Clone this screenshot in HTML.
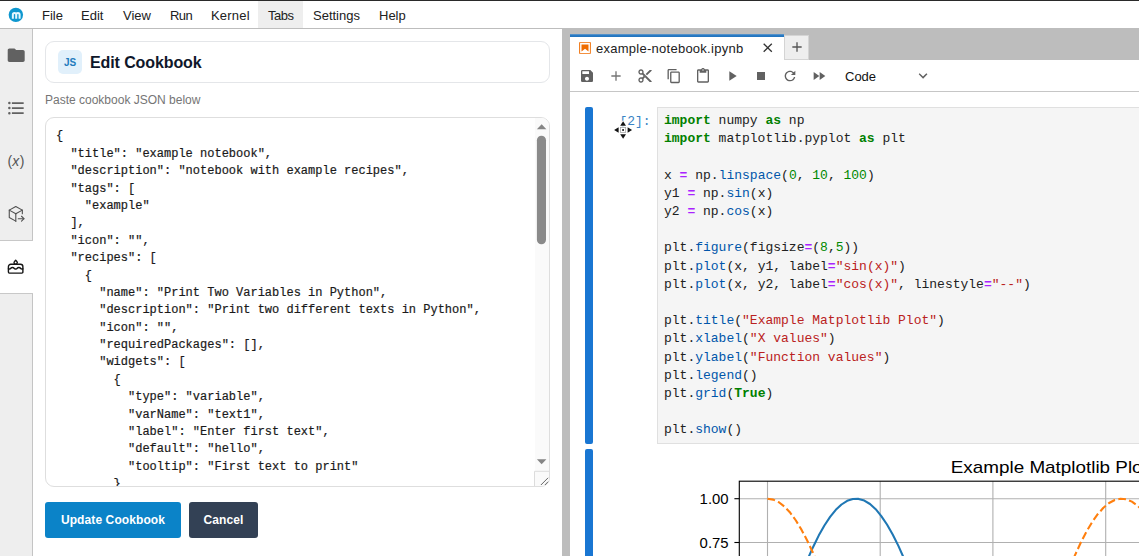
<!DOCTYPE html>
<html>
<head>
<meta charset="utf-8">
<title>Edit Cookbook</title>
<style>
html,body{margin:0;padding:0;}
body{width:1139px;height:556px;overflow:hidden;background:#fff;position:relative;font-family:"Liberation Sans",sans-serif;color:#212121;}
.abs{position:absolute;}
/* top bar */
#topline{left:0;top:0;width:1139px;height:1px;background:#2a2a2a;}
#menubar{left:0;top:1px;width:1139px;height:27px;background:#fff;border-bottom:1px solid #bdbdbd;}
.mi{position:absolute;top:0;height:27px;line-height:30px;font-size:13px;color:#212121;white-space:nowrap;}
#tabsbg{left:258px;top:0;width:45px;height:27px;background:#eeeeee;}
/* sidebar */
#sidebar{left:0;top:29px;width:32px;height:527px;background:#eeeeee;border-right:1px solid #c4c4c4;}
#seltab{left:0;top:240px;width:33px;height:52px;background:#fff;border-top:1px solid #c8c8c8;border-bottom:1px solid #c8c8c8;}
/* left panel */
#card{left:45px;top:41px;width:503px;height:40px;border:1px solid #e4e6e9;border-radius:9px;background:#fff;}
#jsbox{left:58px;top:50px;width:24px;height:24px;border-radius:5px;background:#e1f0fb;color:#1e7bbd;font-weight:bold;font-size:10px;line-height:25px;text-align:center;}
#title{left:90px;top:51px;letter-spacing:-0.1px;font-size:16px;font-weight:bold;color:#0f172a;line-height:24px;white-space:nowrap;}
#hint{left:45px;top:92px;font-size:12px;color:#757575;line-height:16px;white-space:nowrap;}
#ta{left:45px;top:117px;width:503px;height:368px;border:1px solid #dedede;border-radius:9px;background:#fff;overflow:hidden;}
#ta pre{margin:0;position:absolute;left:10px;top:10.4px;font-family:"Liberation Mono",monospace;font-size:12px;line-height:17.39px;color:#1a1a1a;-webkit-text-stroke:0.2px #1a1a1a;}
#track{left:489px;top:0;width:15px;height:368px;background:#fafafa;}
#thumb{left:492px;top:18px;width:9px;height:109px;border-radius:5px;background:#8b8b8b;}
#grip{left:488px;top:353px;width:15px;height:15px;background:#fafafa;border-left:1px solid #dcdcdc;border-top:1px solid #dcdcdc;}
.btn{letter-spacing:0.1px;position:absolute;top:502px;height:36px;border-radius:3px;color:#fff;font-weight:bold;font-size:12px;line-height:36px;text-align:center;white-space:nowrap;}
#b1{left:45px;width:136px;background:#0b83c8;}
#b2{left:189px;width:69px;background:#334155;}
/* right dock */
#dockbg{left:562px;top:29px;width:577px;height:527px;background:#bdbdbd;}
#tabline{left:570px;top:34px;width:214px;height:3px;background:linear-gradient(to bottom,#6f9fcb 0,#2a7bc4 40%,#1f72bd 100%);}
#tab{left:570px;top:37px;width:214px;height:23px;background:#fff;}
#tablabel{left:596px;top:38px;letter-spacing:0.26px;font-size:13px;line-height:22px;color:#212121;white-space:nowrap;}
#addbtn{left:784px;top:35px;width:23px;height:23px;background:#eeeeee;border:1px solid #d4d4d4;}
#nbtoolbar{left:570px;top:60px;width:569px;height:31px;background:#fff;border-bottom:1px solid #c6c6c6;}
#nb{left:570px;top:92px;width:569px;height:464px;background:#fff;}
.coll{position:absolute;left:585px;width:8px;background:#1976d2;border-radius:2px;}
#prompt{left:619.4px;top:113px;font-family:"Liberation Mono",monospace;font-size:13px;line-height:18.2px;color:#3a84c5;white-space:pre;}
#editor{left:657px;top:107px;width:500px;height:335px;background:#f5f5f5;border:1px solid #e0e0e0;}
#editor pre{margin:0;position:absolute;left:6px;top:4px;font-family:"Liberation Mono",monospace;font-size:13px;line-height:18.2px;color:#212121;}
.k{color:#008000;font-weight:bold;}
.o{color:#aa22ff;font-weight:bold;}
.n{color:#008800;}
.s{color:#ba2121;}
.p{color:#0055aa;}

svg{position:absolute;overflow:visible;}
.sbi{left:5.7px;width:20.6px;height:20.6px;}
.tbi{top:68px;width:16px;height:16px;fill:#616161;}
#vx{left:0;top:152px;width:32px;text-align:center;font-size:14px;line-height:18px;color:#555;white-space:nowrap;letter-spacing:0.3px;}
#codesel{left:845px;top:67px;font-size:13px;line-height:20px;color:#111;}
</style>
</head>
<body>
<div class="abs" id="topline"></div>
<div class="abs" id="menubar">
  <div class="abs" id="tabsbg"></div>
  <span class="mi" style="left:42px">File</span>
  <span class="mi" style="left:81px">Edit</span>
  <span class="mi" style="left:123px">View</span>
  <span class="mi" style="left:170px;letter-spacing:-0.6px">Run</span>
  <span class="mi" style="left:211px;letter-spacing:0.2px">Kernel</span>
  <span class="mi" style="left:268px;letter-spacing:-0.45px">Tabs</span>
  <span class="mi" style="left:313px">Settings</span>
  <span class="mi" style="left:379px">Help</span>
</div>
<div class="abs" id="sidebar"></div>
<div class="abs" id="seltab"></div>


<!-- logo -->
<svg style="left:0;top:0;width:32px;height:29px" viewBox="0 0 32 29"><circle cx="15.85" cy="14.85" r="7.2" fill="#0e97cf"/><path d="M12.85 18.7V14.4Q12.85 12.9 14.5 12.9Q16.2 12.9 16.2 14.4V18.7M16.2 14.4Q16.2 12.9 17.9 12.9Q19.6 12.9 19.6 14.4V18.7" fill="none" stroke="#e4f7ff" stroke-width="2" stroke-linejoin="round"/></svg>
<!-- sidebar icons -->
<svg class="sbi" style="left:5.75px;top:44.6px;width:20.4px;height:20.4px" viewBox="0 0 24 24"><path fill="#616161" d="M10 4H4c-1.1 0-1.99.9-1.99 2L2 18c0 1.1.9 2 2 2h16c1.1 0 2-.9 2-2V8c0-1.1-.9-2-2-2h-8l-2-2z"/></svg>
<svg class="sbi" style="left:5.94px;top:98px;width:20.2px;height:20.2px" viewBox="0 0 24 24"><path fill="#616161" d="M7 5h14v2H7V5zm0 8v-2h14v2H7zM4 4.5A1.5 1.5 0 015.5 6 1.5 1.5 0 014 7.5 1.5 1.5 0 012.5 6 1.5 1.5 0 014 4.500zm0 6A1.5 1.5 0 015.5 12 1.5 1.5 0 014 13.5 1.5 1.5 0 012.5 12 1.5 1.5 0 014 10.5zM7 19v-2h14v2H7zm-3-2.5A1.5 1.5 0 015.5 18 1.5 1.5 0 014 19.5 1.5 1.5 0 012.5 18 1.5 1.5 0 014 16.5z"/></svg>
<div class="abs" id="vx">(<i>x</i>)</div>
<svg class="sbi" style="left:6.23px;top:204px;width:19.6px;height:19.6px" viewBox="0 0 24 24" fill="none" stroke="#505050" stroke-width="1.35" stroke-linecap="round" stroke-linejoin="round"><path d="M12 21l-8-4.500v-9l8-4.500l8 4.500v4.500"/><path d="M12 12l8-4.500"/><path d="M12 12v9"/><path d="M12 12l-8-4.500"/><path d="M15 18h7"/><path d="M19 15l3 3l-3 3"/></svg>
<svg class="sbi" style="left:6.2px;top:257.4px;width:19.3px;height:19.3px" viewBox="0 0 24 24" fill="none" stroke="#161616" stroke-width="1.75" stroke-linecap="round" stroke-linejoin="round"><path d="M4.2 20h15.600a1.200 1.200 0 0 0 1.200-1.200v-6.800a3 3 0 0 0-3-3h-12a3 3 0 0 0-3 3v6.800a1.200 1.200 0 0 0 1.200 1.200z"/><path d="M3 14.803c.312.135.654.204 1 .197a2.4 2.4 0 0 0 2-1 2.4 2.4 0 0 1 2-1 2.4 2.4 0 0 1 2 1 2.4 2.4 0 0 0 2 1 2.4 2.4 0 0 0 2-1 2.4 2.4 0 0 1 2-1 2.4 2.4 0 0 1 2 1 2.4 2.4 0 0 0 2 1c.35.007.692-.062 1-.197"/><path d="M12 4l1.465 1.638a2 2 0 1 1-3.015.099l1.55-1.737z"/></svg>

<div class="abs" id="card"></div>
<div class="abs" id="jsbox">JS</div>
<div class="abs" id="title">Edit Cookbook</div>
<div class="abs" id="hint">Paste cookbook JSON below</div>
<div class="abs" id="ta">
<div class="abs" id="track"></div>
<pre>{
  "title": "example notebook",
  "description": "notebook with example recipes",
  "tags": [
    "example"
  ],
  "icon": "",
  "recipes": [
    {
      "name": "Print Two Variables in Python",
      "description": "Print two different texts in Python",
      "icon": "",
      "requiredPackages": [],
      "widgets": [
        {
          "type": "variable",
          "varName": "text1",
          "label": "Enter first text",
          "default": "hello",
          "tooltip": "First text to print"
        }
      ]</pre>
</div>
<div class="btn" id="b1">Update Cookbook</div>
<div class="btn" id="b2">Cancel</div>

<div class="abs" id="dockbg"></div>
<div class="abs" id="tabline"></div>
<div class="abs" id="tab"></div>
<div class="abs" id="tablabel">example-notebook.ipynb</div>
<div class="abs" id="addbtn"></div>
<div class="abs" id="nbtoolbar"></div>

<!-- tab icon, close, plus -->
<svg style="left:577.95px;top:40.85px;width:14px;height:14px" viewBox="0 0 22 22"><g fill="#ef6c00"><path d="M18.7 3.3v15.4H3.3V3.3h15.4m1.5-1.5H1.8v18.3h18.3l.1-18.300z"/><path d="M16.5 16.5l-5.400-4.300-5.600 4.300v-11h11z"/></g></svg>
<svg style="left:760.3px;top:40.4px;width:15.5px;height:15.5px" viewBox="0 0 24 24"><path fill="#333" d="M19 6.410L17.590 5 12 10.590 6.410 5 5 6.410 10.590 12 5 17.590 6.410 19 12 13.410 17.590 19 19 17.590 13.410 12z"/></svg>
<svg style="left:789px;top:39px;width:16px;height:16px" viewBox="0 0 24 24"><path fill="#555" d="M19 13h-6v6h-2v-6H5v-2h6V5h2v6h6v2z"/></svg>
<!-- toolbar -->
<svg class="tbi" style="left:579px" viewBox="0 0 24 24"><path d="M17 3H5a2 2 0 00-2 2v14a2 2 0 002 2h14c1.100 0 2-.9 2-2V7l-4-4zm-5 16c-1.660 0-3-1.340-3-3s1.340-3 3-3 3 1.340 3 3-1.340 3-3 3zm3-10H5V5h10v4z"/></svg>
<svg class="tbi" style="left:608px" viewBox="0 0 24 24"><path fill="#757575" d="M19 13h-6v6h-2v-6H5v-2h6V5h2v6h6v2z"/></svg>
<svg class="tbi" style="left:637px" viewBox="0 0 24 24"><path d="M9.640 7.640c.230-.5.360-1.050.360-1.640 0-2.210-1.790-4-4-4S2 3.790 2 6s1.790 4 4 4c.590 0 1.140-.130 1.640-.360L10 12l-2.360 2.360C7.140 14.130 6.590 14 6 14c-2.210 0-4 1.790-4 4s1.790 4 4 4 4-1.790 4-4c0-.590-.130-1.140-.360-1.640L12 14l7 7h3v-1L9.640 7.640zM6 8c-1.100 0-2-.890-2-2s.9-2 2-2 2 .890 2 2-.9 2-2 2zm0 12c-1.100 0-2-.890-2-2s.9-2 2-2 2 .890 2 2-.9 2-2 2zm6-7.500c-.280 0-.5-.220-.5-.5s.220-.5.5-.5.500.220.500.5-.220.500-.5.500zM19 3l-6 6 2 2 7-7V3z"/></svg>
<svg class="tbi" style="left:665.5px" viewBox="0 0 18 18"><path d="M11.9 1H3.2c-.8 0-1.500.7-1.500 1.500v10.200h1.500V2.500h8.700V1zm2.200 2.900h-8c-.8 0-1.500.7-1.500 1.500v10.200c0 .8.7 1.500 1.500 1.500h8c.8 0 1.500-.7 1.500-1.500V5.400c-.1-.8-.7-1.500-1.500-1.500zm0 11.600h-8V5.400h8v10.100z"/></svg>
<svg class="tbi" style="left:695px" viewBox="0 0 24 24"><path d="M19 2h-4.180C14.400.84 13.300 0 12 0c-1.300 0-2.400.84-2.820 2H5c-1.100 0-2 .9-2 2v16c0 1.100.9 2 2 2h14c1.100 0 2-.9 2-2V4c0-1.100-.9-2-2-2zm-7 0c.550 0 1 .450 1 1s-.450 1-1 1-1-.450-1-1 .450-1 1-1zm7 18H5V4h2v3h10V4h2v16z"/></svg>
<svg class="tbi" style="left:724px" viewBox="0 0 24 24"><path d="M8 5v14l11-7z"/></svg>
<svg class="tbi" style="left:753px" viewBox="0 0 24 24"><path d="M6 6h12v12H6z"/></svg>
<svg class="tbi" style="left:782px" viewBox="0 0 18 18"><path d="M9 13.500c-2.490 0-4.500-2.010-4.500-4.500S6.510 4.500 9 4.500c1.240 0 2.360.520 3.170 1.330L10 8h5V3l-1.760 1.760C12.150 3.680 10.660 3 9 3 5.690 3 3.010 5.690 3.010 9S5.690 15 9 15c2.970 0 5.430-2.160 5.900-5h-1.520c-.460 2-2.240 3.500-4.380 3.500z"/></svg>
<svg class="tbi" style="left:811px" viewBox="0 0 24 24"><path d="M4 18l8.500-6L4 6v12zm9-12v12l8.500-6L13 6z"/></svg>
<div class="abs" id="codesel">Code</div>
<svg style="left:915px;top:68px;width:16px;height:16px" viewBox="0 0 18 18"><path fill="#616161" d="M5.200 5.900L9 9.700l3.800-3.800 1.200 1.200-4.900 5-4.900-5z"/></svg>
<div class="abs" id="nb"></div>
<div class="coll" style="top:107px;height:337px;"></div>
<div class="coll" style="top:449px;height:120px;"></div>
<div class="abs" id="prompt">[2]:</div>
<div class="abs" id="editor"><pre><span class="k">import</span> numpy <span class="k">as</span> np
<span class="k">import</span> matplotlib.pyplot <span class="k">as</span> plt

x <span class="o">=</span> np.<span class="p">linspace</span>(<span class="n">0</span>, <span class="n">10</span>, <span class="n">100</span>)
y1 <span class="o">=</span> np.<span class="p">sin</span>(x)
y2 <span class="o">=</span> np.<span class="p">cos</span>(x)

plt.<span class="p">figure</span>(figsize<span class="o">=</span>(<span class="n">8</span>,<span class="n">5</span>))
plt.<span class="p">plot</span>(x, y1, label<span class="o">=</span><span class="s">"sin(x)"</span>)
plt.<span class="p">plot</span>(x, y2, label<span class="o">=</span><span class="s">"cos(x)"</span>, linestyle<span class="o">=</span><span class="s">"--"</span>)

plt.<span class="p">title</span>(<span class="s">"Example Matplotlib Plot"</span>)
plt.<span class="p">xlabel</span>(<span class="s">"X values"</span>)
plt.<span class="p">ylabel</span>(<span class="s">"Function values"</span>)
plt.<span class="p">legend</span>()
plt.<span class="p">grid</span>(<span class="k">True</span>)

plt.<span class="p">show</span>()</pre></div>

<svg id="ov" style="left:0;top:0;width:1139px;height:556px" viewBox="0 0 1139 556">
<!-- textarea scrollbar -->
<rect x="536.9" y="135.7" width="9.1" height="108.6" rx="4.55" fill="#8a8a8a"/>
<path d="M536.9 129.2L546.4 129.2L541.65 124.2Z" fill="#858585"/>
<path d="M536.9 459.2L546.4 459.2L541.65 464.2Z" fill="#858585"/>
<path d="M534.5 486V471.3H549" fill="none" stroke="#dcdcdc" stroke-width="1"/>
<path d="M540.9 485L548.1 477.8M544.9 485L548.1 481.7" stroke="#555" stroke-width="0.9" fill="none"/>
<!-- chart -->
<g stroke="#b0b0b0" stroke-width="1.11"><line x1="767.5" y1="481.2" x2="767.5" y2="866.2"/><line x1="880.2" y1="481.2" x2="880.2" y2="866.2"/><line x1="992.9" y1="481.2" x2="992.9" y2="866.2"/><line x1="1105.7" y1="481.2" x2="1105.7" y2="866.2"/><line x1="739.3" y1="498.7" x2="1359.3" y2="498.7"/><line x1="739.3" y1="542.5" x2="1359.3" y2="542.5"/><line x1="739.3" y1="586.2" x2="1359.3" y2="586.2"/></g>
<g fill="none" stroke-width="2.08" stroke-linejoin="round">
<path d="M767.5 673.7 L773.2 656.1 L778.9 638.6 L784.6 621.5 L790.3 604.9 L795.9 589.0 L801.6 574.0 L807.3 560.0 L813.0 547.2 L818.7 535.6 L824.4 525.5 L830.1 516.9 L835.8 509.8 L841.5 504.5 L847.2 500.8 L852.9 499.0 L858.6 498.9 L864.3 500.6 L870.0 504.0 L875.7 509.2 L881.3 516.1 L887.0 524.5 L892.7 534.5 L898.4 545.9 L904.1 558.7 L909.8 572.5 L915.5 587.5 L921.2 603.3 L926.9 619.8 L932.6 636.8 L938.3 654.3 L944.0 671.9 L949.7 689.6 L955.4 707.0 L961.1 724.2 L966.7 740.8 L972.4 756.8 L978.1 771.9 L983.8 786.0 L989.5 799.0 L995.2 810.7 L1000.9 820.9 L1006.6 829.7 L1012.3 836.9 L1018.0 842.5 L1023.7 846.3 L1029.4 848.3 L1035.1 848.6 L1040.8 847.1 L1046.5 843.8 L1052.1 838.8 L1057.8 832.1 L1063.5 823.8 L1069.2 813.9 L1074.9 802.7 L1080.6 790.1 L1086.3 776.3 L1092.0 761.5 L1097.7 745.8 L1103.4 729.3 L1109.1 712.3 L1114.8 694.9 L1120.5 677.3 L1126.2 659.6 L1131.9 642.1 L1137.5 624.9 L1143.2 608.2 L1148.9 592.2 L1154.6 577.0 L1160.3 562.8 L1166.0 549.7 L1171.7 537.9 L1177.4 527.4 L1183.1 518.5 L1188.8 511.1 L1194.5 505.4 L1200.2 501.4 L1205.9 499.2 L1211.6 498.8 L1217.3 500.1 L1222.9 503.2 L1228.6 508.0 L1234.3 514.5 L1240.0 522.7 L1245.7 532.4 L1251.4 543.5 L1257.1 556.0 L1262.8 569.6 L1268.5 584.3 L1274.2 600.0 L1279.9 616.4 L1285.6 633.3 L1291.3 650.7 L1297.0 668.3 L1302.7 686.0 L1308.3 703.5 L1314.0 720.7 L1319.7 737.5 L1325.4 753.6 L1331.1 768.9" stroke="#1f77b4" stroke-linecap="square"/>
<path d="M767.5 498.7 L773.2 499.6 L778.9 502.3 L784.6 506.7 L790.3 512.8 L795.9 520.5 L801.6 529.9 L807.3 540.7 L813.0 552.8 L818.7 566.2 L824.4 580.6 L830.1 596.1 L835.8 612.3 L841.5 629.1 L847.2 646.4 L852.9 664.0 L858.6 681.6 L864.3 699.2 L870.0 716.6 L875.7 733.4 L881.3 749.7 L887.0 765.2 L892.7 779.8 L898.4 793.3 L904.1 805.6 L909.8 816.5 L915.5 826.0 L921.2 833.9 L926.9 840.2 L932.6 844.8 L938.3 847.6 L944.0 848.7 L949.7 848.0 L955.4 845.5 L961.1 841.3 L966.7 835.3 L972.4 827.7 L978.1 818.5 L983.8 807.9 L989.5 795.9 L995.2 782.6 L1000.9 768.3 L1006.6 752.9 L1012.3 736.8 L1018.0 720.0 L1023.7 702.8 L1029.4 685.2 L1035.1 667.6 L1040.8 650.0 L1046.5 632.6 L1052.1 615.7 L1057.8 599.3 L1063.5 583.7 L1069.2 569.0 L1074.9 555.4 L1080.6 543.0 L1086.3 531.9 L1092.0 522.3 L1097.7 514.2 L1103.4 507.8 L1109.1 503.0 L1114.8 500.0 L1120.5 498.7 L1126.2 499.3 L1131.9 501.6 L1137.5 505.6 L1143.2 511.4 L1148.9 518.8 L1154.6 527.8 L1160.3 538.3 L1166.0 550.2 L1171.7 563.4 L1177.4 577.6 L1183.1 592.9 L1188.8 608.9 L1194.5 625.6 L1200.2 642.8 L1205.9 660.4 L1211.6 678.0 L1217.3 695.7 L1222.9 713.1 L1228.6 730.0 L1234.3 746.5 L1240.0 762.1 L1245.7 776.9 L1251.4 790.6 L1257.1 803.2 L1262.8 814.4 L1268.5 824.2 L1274.2 832.4 L1279.9 839.0 L1285.6 844.0 L1291.3 847.2 L1297.0 848.6 L1302.7 848.3 L1308.3 846.1 L1314.0 842.3 L1319.7 836.7 L1325.4 829.4 L1331.1 820.5" stroke="#ff7f0e" stroke-dasharray="7.7 3.33"/>
</g>
<rect x="739.3" y="481.2" width="620.0" height="385.0" fill="none" stroke="#000" stroke-width="1.11"/>
<g stroke="#000" stroke-width="1.11"><line x1="734.4" y1="498.7" x2="739.3" y2="498.7"/><line x1="734.4" y1="542.5" x2="739.3" y2="542.5"/><line x1="734.4" y1="586.2" x2="739.3" y2="586.2"/></g>
<g font-family="Liberation Sans, sans-serif" font-size="14.3" fill="#000"><text x="728.6" y="503.9" text-anchor="end" textLength="29" lengthAdjust="spacingAndGlyphs">1.00</text><text x="728.6" y="547.7" text-anchor="end" textLength="29" lengthAdjust="spacingAndGlyphs">0.75</text><text x="728.6" y="591.4" text-anchor="end" textLength="29" lengthAdjust="spacingAndGlyphs">0.50</text></g>
<text x="950.8" y="472.6" font-family="Liberation Sans, sans-serif" font-size="17" fill="#000" textLength="197" lengthAdjust="spacingAndGlyphs">Example Matplotlib Plot</text>
<!-- mouse cursor -->
<g stroke="#fff" stroke-width="1.7" stroke-linejoin="round" fill="#111" paint-order="stroke">
<path d="M623.1 121.3L626 125.7H620.2Z"/><path d="M623.1 138.7L626 134.3H620.2Z"/>
<path d="M614.1 130L618.6 127.2V132.8Z"/><path d="M632.1 130L627.6 127.2V132.8Z"/>
</g>
<rect x="619.6" y="126.6" width="7" height="6.8" fill="#fff"/><rect x="620.5" y="127.5" width="5.2" height="5" fill="#fff" stroke="#9c9c9c" stroke-width=".7"/>
<rect x="622.2" y="129.1" width="1.8" height="1.8" fill="#222"/>
</svg>
</body>
</html>
